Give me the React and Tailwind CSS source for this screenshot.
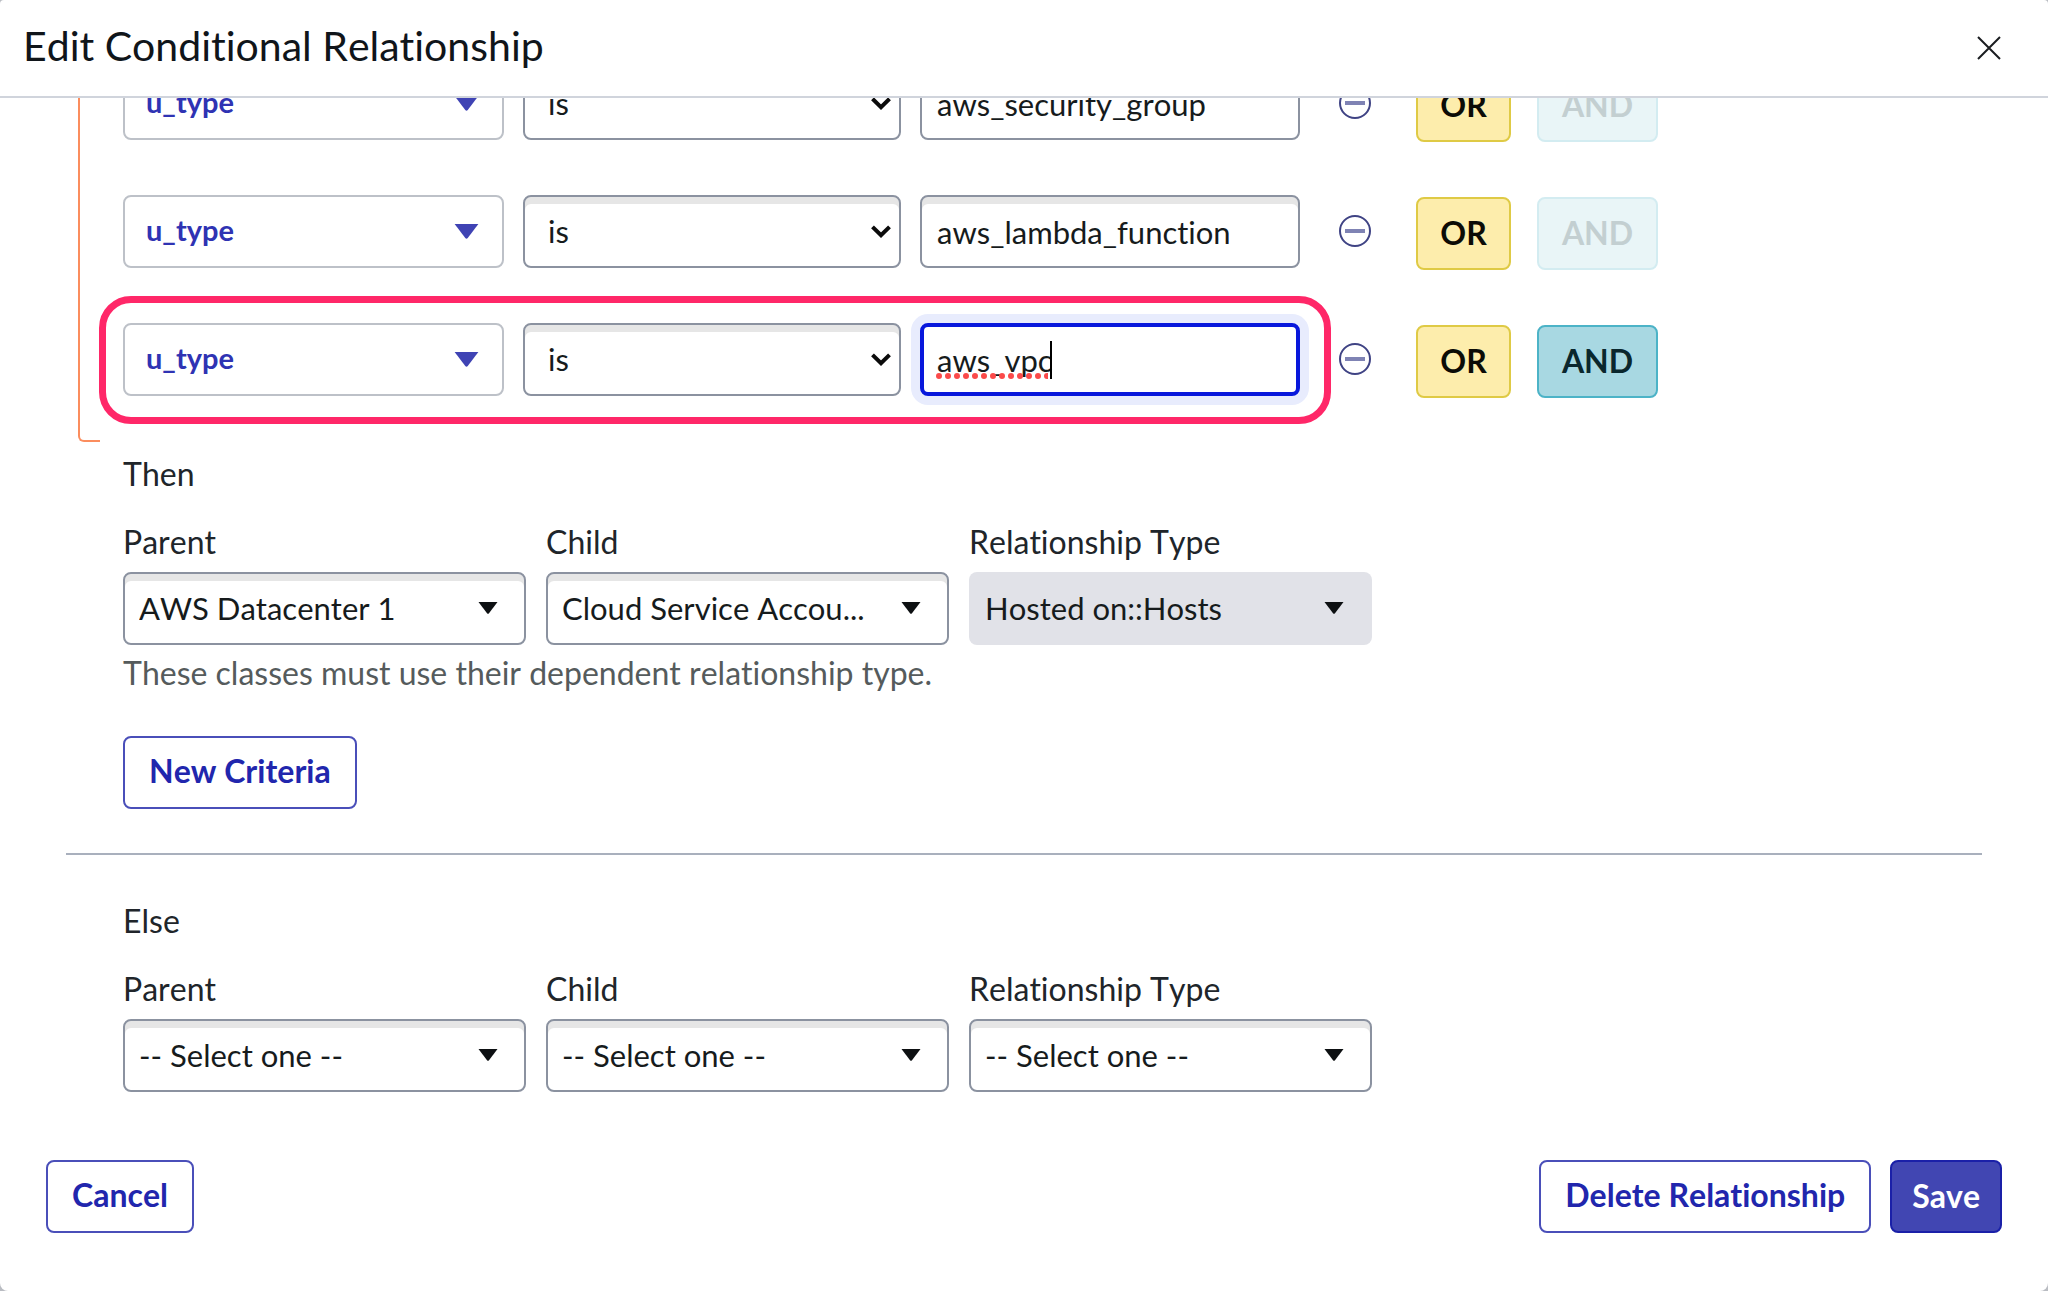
const FIELD =
  'h-[73px] w-full appearance-none rounded-lg border-2 border-[#8b92a0] bg-white text-[31px] text-[#161b1c] outline-none';
const SHADE = 'shadow-[inset_0_7px_0_#e6e6e6]';
const ACTION =
  'h-[73px] rounded-lg border-2 border-[#4a4fb9] px-6 pb-[3px] text-[32px] font-bold';

function Triangle({ className }) {
  return (
    <svg viewBox="0 0 20 12" className={className} fill="currentColor" aria-hidden="true">
      <path d="M0.5 0H19.5L11 11.2Q10 12.4 9 11.2Z" />
    </svg>
  );
}

function Condition({ id, value, focused, canAnd }) {
  return (
    <div className="flex items-start">
      <div className="relative flex gap-[19px]">
        <button
          type="button"
          aria-haspopup="listbox"
          className="flex h-[73px] w-[381px] items-center justify-between rounded-lg border-2 border-[#bdc1c8] pr-[22px] pl-[21px] text-[29px] font-bold text-[#2f33b3]"
        >
          <span className="pb-1">u_type</span>
          <Triangle className="h-[15px] w-[27px] text-[#3f43b4]" />
        </button>
        <div className="relative w-[378px]">
          <select aria-label="Operator" className={FIELD + ' pr-12 pl-[23px] ' + SHADE} defaultValue="is">
            <option>is</option>
            <option>is not</option>
          </select>
          <svg
            viewBox="0 0 20 13"
            className="pointer-events-none absolute top-[30px] right-[10px] h-[13px] w-5"
            fill="none"
            stroke="#0b0b0b"
            strokeWidth="4"
            aria-hidden="true"
          >
            <path d="M1.5 1.8L10 10.2L18.5 1.8" />
          </svg>
        </div>
        <div className="relative w-[380px]">
          <input
            id={id}
            aria-label="Value"
            defaultValue={value}
            spellCheck={false}
            className={
              focused
                ? 'h-[73px] w-full rounded-lg border-4 border-[#0818dc] bg-white px-[13px] text-[31px] text-[#161b1c] shadow-[0_0_0_9px_#e8ecfd] outline-none'
                : FIELD + ' px-[15px] ' + SHADE
            }
          />
          {focused && (
            <>
              <svg viewBox="0 0 112 6" className="pointer-events-none absolute top-[50px] left-4 h-[6px] w-[112px]" aria-hidden="true">
                <path d="M3 3H112" stroke="#fb4a4a" strokeWidth="6" strokeLinecap="round" strokeDasharray="0 9" />
              </svg>
              <span className="pointer-events-none absolute top-[18px] left-[130px] h-[38px] w-0.5 bg-black" />
            </>
          )}
        </div>
        {focused && (
          <span className="pointer-events-none absolute -top-[27px] -right-[31px] -bottom-[28px] -left-[24px] rounded-[32px] border-[7px] border-[#ff2768]" />
        )}
      </div>
      <button type="button" aria-label="Remove condition" className="mt-5 ml-[39px] size-8">
        <svg viewBox="0 0 32 32" fill="none" stroke="#3f4384" aria-hidden="true">
          <circle cx="16" cy="16" r="15" strokeWidth="2" />
          <path d="M6 16H26" strokeWidth="4" stroke="#7f83b4" />
        </svg>
      </button>
      <div className="mt-0.5 ml-[45px] flex gap-[26px] text-[32px] font-bold">
        <button type="button" className="h-[73px] w-[95px] rounded-lg border-2 border-[#dfca45] bg-[#fdedac] pb-0.5 text-[#0c0c06]">
          OR
        </button>
        <button
          type="button"
          disabled={!canAnd}
          className={
            canAnd
              ? 'h-[73px] w-[121px] rounded-lg border-2 border-[#4cb3c7] bg-[#a8d8e2] pb-0.5 text-[#0a272d]'
              : 'h-[73px] w-[121px] rounded-lg border-2 border-[#d3ecf1] bg-[#e9f5f7] pb-0.5 text-[#c3cfd1]'
          }
        >
          AND
        </button>
      </div>
    </div>
  );
}

function Picker({ id, label, value, disabled }) {
  return (
    <div className="w-[403px]">
      <label htmlFor={id} className="block pb-[10px] text-[32px] leading-10 text-[#20252a]">
        {label}
      </label>
      <div className="relative">
        <select
          id={id}
          disabled={disabled}
          className={
            disabled
              ? 'h-[73px] w-full appearance-none rounded-lg bg-[#e1e2e8] pr-16 pl-4 text-[31px] text-[#161b1c] opacity-100'
              : FIELD + ' pr-16 pl-[14px] ' + SHADE
          }
        >
          <option>{value}</option>
        </select>
        <Triangle className="pointer-events-none absolute top-[30px] right-7 h-3 w-5 text-[#0d1012]" />
      </div>
    </div>
  );
}

const ROWS = [
  { id: 'value-1', value: 'aws_security_group' },
  { id: 'value-2', value: 'aws_lambda_function' },
  { id: 'value-3', value: 'aws_vpc', focused: true, canAnd: true },
];

export default function App() {
  return (
    <div className="h-screen bg-[#b9bcc2]">
      <div
        role="dialog"
        aria-labelledby="title"
        className="flex h-full flex-col overflow-hidden rounded-t-sm rounded-b-lg bg-white font-[Lato,sans-serif] text-[32px] text-[#20252a] [font-kerning:none] [font-variant-ligatures:none]"
      >
        <header className="flex h-[98px] shrink-0 items-center justify-between border-b-2 border-[#d0d4dc] pr-[47px] pl-[23px]">
          <h1 id="title" className="pb-1 text-[41px] text-[#10151a]">
            Edit Conditional Relationship
          </h1>
          <button type="button" aria-label="Close">
            <svg viewBox="0 0 24 24" className="size-6" stroke="#1a1d20" strokeWidth="2" aria-hidden="true">
              <path d="M1 1L23 23M23 1L1 23" />
            </svg>
          </button>
        </header>

        <main className="min-h-0 flex-1 overflow-hidden">
          <div className="-mt-[31px] flex pl-[78px]">
            <div className="w-[22px] rounded-bl-md border-b-2 border-l-2 border-[#fb8d5e]" />
            <div className="flex flex-col gap-[53px] pb-11 pl-[23px]">
              {ROWS.map((row) => (
                <Condition key={row.id} {...row} />
              ))}
            </div>
          </div>

          <section className="px-[123px] pt-3">
            <h2 className="leading-10">Then</h2>
            <div className="flex gap-5 pt-7">
              <Picker id="then-parent" label="Parent" value="AWS Datacenter 1" />
              <Picker id="then-child" label="Child" value="Cloud Service Accou..." />
              <Picker id="then-type" label="Relationship Type" value="Hosted on::Hosts" disabled />
            </div>
            <p className="pt-2 leading-10 text-[#555b5c]">
              These classes must use their dependent relationship type.
            </p>
            <button type="button" className={ACTION + ' mt-[43px] block text-[#2126ad]'}>
              New Criteria
            </button>
          </section>

          <hr className="mx-[66px] mt-11 border-t-2 border-[#a9b0bd]" />

          <section className="px-[123px] pt-[46px]">
            <h2 className="leading-10">Else</h2>
            <div className="flex gap-5 pt-7">
              <Picker id="else-parent" label="Parent" value="-- Select one --" />
              <Picker id="else-child" label="Child" value="-- Select one --" />
              <Picker id="else-type" label="Relationship Type" value="-- Select one --" />
            </div>
          </section>
        </main>

        <footer className="flex shrink-0 justify-between pr-[46px] pb-[58px] pl-[46px]">
          <button type="button" className={ACTION + ' text-[#2126ad]'}>
            Cancel
          </button>
          <div className="flex gap-[19px]">
            <button type="button" className={ACTION + ' text-[#2126ad]'}>
              Delete Relationship
            </button>
            <button type="button" className="h-[73px] rounded-lg border-2 border-[#1a20a8] bg-[#4146b2] px-5 pb-0.5 text-[32px] font-bold text-white">
              Save
            </button>
          </div>
        </footer>
      </div>
    </div>
  );
}
